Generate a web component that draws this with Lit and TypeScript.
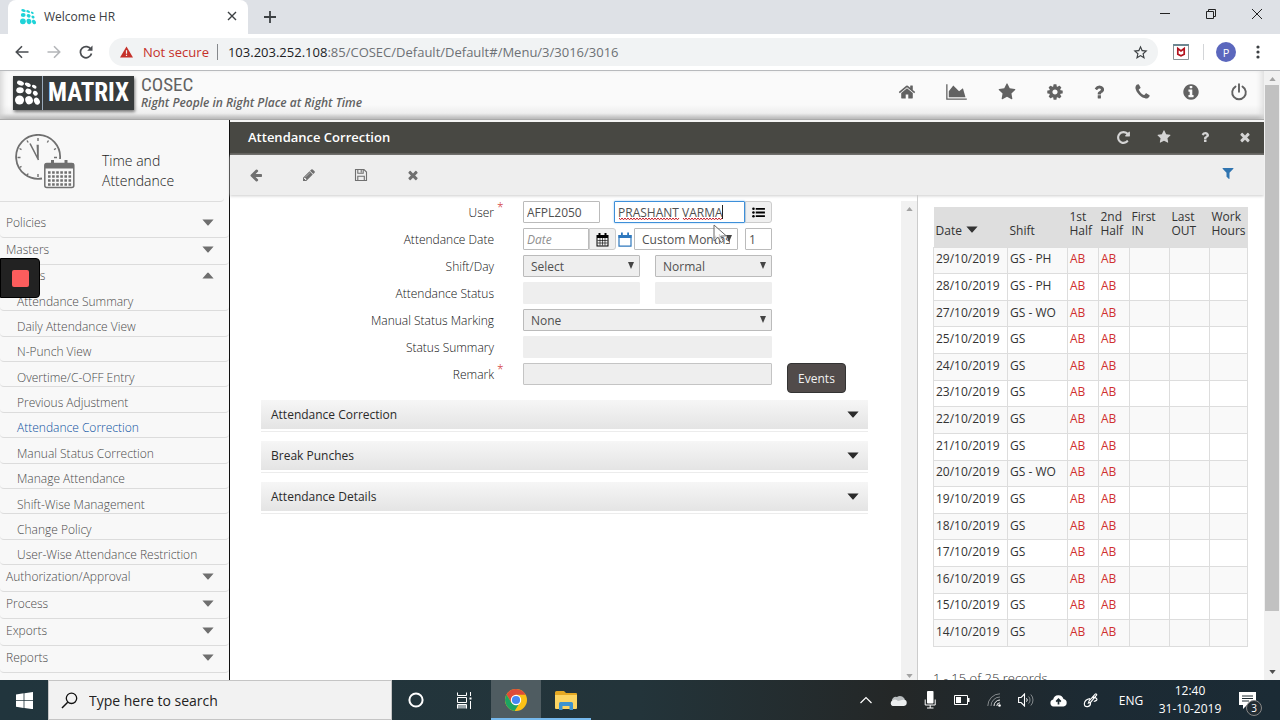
import { LitElement, html, css, svg, nothing } from "lit";
import { customElement, property, state } from "lit/decorators.js";
import { classMap } from "lit/directives/class-map.js";

interface Glyph {
  box: string;
  w: number;
  h: number;
  body: unknown;
}

const FA = "0 0 1792 1792";
const fa = (d: string, w: number, h = w, box = FA): Glyph => ({ box, w, h, body: svg`<path d=${d}></path>` });

const STAR =
  "M1728 647q0 22-26 48l-363 354 86 500q1 7 1 20 0 21-10.500 35.500t-30.500 14.500q-19 0-40-12l-449-236-449 236q-22 12-40 12-21 0-31.500-14.500t-10.500-35.500q0-6 2-20l86-500-364-354q-25-27-25-48 0-37 56-46l502-73 225-455q19-41 49-41t49 41l225 455 502 73q56 9 56 46z";
const QUESTION =
  "M1088 1256v240q0 16-12 28t-28 12h-240q-16 0-28-12t-12-28v-240q0-16 12-28t28-12h240q16 0 28 12t12 28zm316-600q0 54-15.500 101t-35 76.500-55 59.500-57.500 43.500-61 35.500q-41 23-68.500 65t-27.500 67q0 17-12 32.500t-28 15.500h-240q-15 0-25.500-18.500t-10.500-37.500v-45q0-83 65-156.500t143-108.500q59-27 84-56t25-76q0-42-46.500-74t-107.500-32q-65 0-108 29-35 25-107 115-13 16-31 16-12 0-25-8l-164-125q-13-10-15.500-25t5.500-28q160-266 464-266 80 0 161 31t146 83 106 127.500 41 158.500z";
const TIMES =
  "M1490 1322q0 40-28 68l-136 136q-28 28-68 28t-68-28l-294-294-294 294q-28 28-68 28t-68-28l-136-136q-28-28-28-68t28-68l294-294-294-294q-28-28-28-68t28-68l136-136q28-28 68-28t68 28l294 294 294-294q28-28 68-28t68 28l136 136q28 28 28 68t-28 68l-294 294 294 294q28 28 28 68z";

const dots = svg`
  <ellipse cx="3.500" cy="2.500" rx="2.300" ry="1.400" transform="rotate(20 3.500 2.500)"></ellipse>
  <ellipse cx="8.200" cy="3.500" rx="2" ry="1.200" transform="rotate(25 8.200 3.500)"></ellipse>
  <ellipse cx="12.300" cy="4.800" rx="1.600" ry="1" transform="rotate(30 12.300 4.800)"></ellipse>
  <ellipse cx="3.200" cy="7" rx="2.400" ry="1.900"></ellipse>
  <ellipse cx="8.600" cy="7.800" rx="2" ry="1.700" transform="rotate(30 8.600 7.800)"></ellipse>
  <ellipse cx="13" cy="9" rx="1.700" ry="1.400" transform="rotate(40 13 9)"></ellipse>
  <circle cx="2.900" cy="13.300" r="2.900"></circle>
  <ellipse cx="9" cy="13.400" rx="2.400" ry="2.700" transform="rotate(-20 9 13.400)"></ellipse>
  <ellipse cx="14" cy="14" rx="1.800" ry="2.400" transform="rotate(-25 14 14)"></ellipse>`;

const calendar = svg`
  <path d="M1.500 3h2v-2h2v2h4v-2h2v2h2v11.500h-12z M2.500 6v7.500h10V6z" fill-rule="evenodd"></path>
  <path d="M2.500 8.500h10M2.500 11h10M5 6v7.500M7.500 6v7.500M10 6v7.500" fill="none" stroke="currentColor" stroke-width=".6"></path>`;

const ICONS: Record<string, Glyph> = {
  dots: { box: "0 0 16 17", w: 16, h: 17, body: dots },
  dotsLarge: { box: "0 0 16 17", w: 25, h: 27, body: dots },
  home: fa(
    "M1472 992v480q0 26-19 45t-45 19h-384v-384h-256v384h-384q-26 0-45-19t-19-45v-480q0-1 .5-3t.5-3l575-474 575 474q1 2 1 6zm223-69l-62 74q-8 9-21 11h-3q-13 0-21-7l-692-577-692 577q-12 8-24 7-13-2-21-11l-62-74q-8-10-7-23.500t11-21.500l719-599q32-26 76-26t76 26l244 204v-195q0-14 9-23t23-9h192q14 0 23 9t9 23v408l219 182q10 8 11 21.500t-7 23.500z",
    18,
  ),
  chart: {
    box: "0 0 2048 1792",
    w: 21,
    h: 18,
    body: svg`<path d="M2048 1536v128H0V128h128v1408h1920zM1664 512l256 896H256V832l448-576 576 576z"></path>`,
  },
  star: fa(STAR, 18),
  starSmall: fa(STAR, 14),
  cog: fa(
    "M1152 896q0-106-75-181t-181-75-181 75-75 181 75 181 181 75 181-75 75-181zm512-109v222q0 12-8 23t-20 13l-185 28q-19 54-39 91 35 50 107 138 10 12 10 25t-9 23q-27 37-99 108t-94 71q-12 0-26-9l-138-108q-44 23-91 38-16 136-29 186-7 28-36 28h-222q-14 0-24.500-8.500t-11.500-21.500l-28-184q-49-16-90-37l-141 107q-10 9-25 9-14 0-25-11-126-114-165-168-7-10-7-23 0-12 8-23 15-21 51-66.500t54-70.500q-27-50-41-99l-183-27q-13-2-21-12.500t-8-23.500v-222q0-12 8-23t19-13l186-28q14-46 39-92-40-57-107-138-10-12-10-24 0-10 9-23 26-36 98.500-107.500t94.500-71.500q13 0 26 10l138 107q44-23 91-38 16-136 29-186 7-28 36-28h222q14 0 24.500 8.500t11.500 21.500l28 184q49 16 90 37l142-107q9-9 24-9 13 0 25 10 129 119 165 170 7 8 7 22 0 12-8 23-15 21-51 66.500t-54 70.500q26 50 41 98l183 28q13 2 21 12.500t8 23.500z",
    18,
  ),
  question: fa(QUESTION, 10, 18, "398 0 996 1792"),
  questionSmall: fa(QUESTION, 14),
  phone: fa(
    "M1600 1240q0 27-10 70.500t-21 68.500q-21 50-122 106-94 51-186 51-27 0-53-3.500t-57.500-12.500-47-14.500-55.500-20.500-49-18q-98-35-175-83-127-79-264-216t-216-264q-48-77-83-175-3-9-18-49t-20.500-55.500-14.500-47-12.500-57.500-3.500-53q0-92 51-186 56-101 106-122 25-11 68.500-21t70.500-10q14 0 21 3 18 6 53 76 11 19 30 54t35 63.500 31 53.500q3 4 17.500 25t21.500 35.500 7 28.500q0 20-28.500 50t-62 55-62 53-28.500 46q0 9 5 22.500t8.500 20.500 14 24 11.500 19q76 137 174 235t235 174q2 1 19 11.500t24 14 20.500 8.500 22.500 5q18 0 46-28.500t53-62 55-62 50-28.500q14 0 28.500 7t35.500 21.500 25 17.500q25 15 53.500 31t63.500 35 54 30q70 35 76 53 3 7 3 21z",
    17,
    18,
    "50 0 1692 1792",
  ),
  info: fa(
    "M1152 1376v-160q0-14-9-23t-23-9h-96v-512q0-14-9-23t-23-9h-320q-14 0-23 9t-9 23v160q0 14 9 23t23 9h96v320h-96q-14 0-23 9t-9 23v160q0 14 9 23t23 9h448q14 0 23-9t9-23zm-128-896v-160q0-14-9-23t-23-9h-192q-14 0-23 9t-9 23v160q0 14 9 23t23 9h192q14 0 23-9t9-23zm640 416q0 209-103 385.500t-279.500 279.500-385.500 103-385.500-103-279.500-279.500-103-385.500 103-385.500 279.500-279.500 385.500-103 385.500 103 279.500 279.500 103 385.500z",
    18,
  ),
  power: {
    box: "0 0 18 18",
    w: 18,
    h: 18,
    body: svg`<path d="M5.500 3.600a6.800 6.800 0 1 0 7 0M9 1.200v7.600" fill="none" stroke="currentColor" stroke-width="1.900" stroke-linecap="round"></path>`,
  },
  redo: fa(
    "M1664 256v448q0 26-19 45t-45 19h-448q-42 0-59-40-17-39 14-69l138-138q-148-137-349-137-104 0-198.500 40.500t-163.500 109.500-109.500 163.500-40.500 198.500 40.500 198.500 109.500 163.500 163.500 109.500 198.500 40.500q119 0 225-52t179-147q7-10 23-12 15 0 25 9l137 138q9 8 9.500 20.500t-7.500 22.500q-109 132-264 204.500t-327 72.500q-156 0-298-61t-245-164-164-245-61-298 61-298 164-245 245-164 298-61q147 0 284.500 55.500t244.500 156.500l130-129q29-31 70-14 39 17 39 59z",
    15,
  ),
  times: fa(TIMES, 14),
  arrow: fa(
    "M1536 896v128q0 53-32.500 90.500t-84.500 37.500h-704l293 294q38 36 38 90t-38 90l-75 76q-37 37-90 37-52 0-91-37l-651-652q-37-37-37-90 0-52 37-91l651-650q38-38 91-38 52 0 90 38l75 74q38 38 38 91t-38 91l-293 293h704q52 0 84.500 37.500t32.500 90.500z",
    14,
  ),
  pencil: fa(
    "M491 1536l91-91-235-235-91 91v107h128v128h107zm523-928q0-22-22-22-10 0-17 7l-542 542q-7 7-7 17 0 22 22 22 10 0 17-7l542-542q7-7 7-17zm-54-192l416 416-832 832h-416v-416zm683 96q0 53-37 90l-166 166-416-416 166-165q36-38 90-38 53 0 91 38l235 234q37 39 37 91z",
    14,
  ),
  save: {
    box: "0 0 14 14",
    w: 14,
    h: 14,
    body: svg`<path d="M1.500 1.500h8.500l2.500 2.500v8.500h-11zM3.800 12.500v-4.300h6.500v4.300M3.800 1.500v3.800h5.400V1.500M7.200 2v2.500" fill="none" stroke="currentColor" stroke-width="1.100"></path>`,
  },
  filter: fa(
    "M1595 295q17 41-14 70l-493 493v742q0 42-39 59-13 5-25 5-27 0-45-19l-256-256q-19-19-19-45v-486l-493-493q-31-29-14-70 17-39 59-39h1280q42 0 59 39z",
    14,
  ),
  list: {
    box: "0 0 14 12",
    w: 13,
    h: 11,
    body: svg`<path d="M4 1h10v2H4zM4 5h10v2H4zM4 9h10v2H4z"></path><circle cx="1.500" cy="2" r="1.400"></circle><circle cx="1.500" cy="6" r="1.400"></circle><circle cx="1.500" cy="10" r="1.400"></circle>`,
  },
  calendar: { box: "0 0 15 15", w: 15, h: 15, body: calendar },
  calendarOpen: {
    box: "0 0 14 15",
    w: 14,
    h: 15,
    body: svg`<path d="M1 3.500h12v10.700H1z" fill="none" stroke="currentColor" stroke-width="1.200"></path><path d="M.5 3h13v3H.5zM3 .5h1.800V4H3zM9.200.5H11V4H9.200z"></path>`,
  },
  caret: { box: "0 0 12 7", w: 12, h: 7, body: svg`<path d="M.4.5h11.200L6.800 6a1 1 0 0 1-1.600 0z"></path>` },
  caretUp: { box: "0 0 12 7", w: 12, h: 7, body: svg`<path d="M.4 6.500h11.200L6.800 1a1 1 0 0 0-1.600 0z"></path>` },
  scrollUp: { box: "0 0 8 5", w: 7, h: 4, body: svg`<path d="M0 5l4-5 4 5z"></path>` },
  scrollDown: { box: "0 0 8 5", w: 7, h: 4, body: svg`<path d="M0 0l4 5 4-5z"></path>` },
  clock: {
    box: "0 0 60 56",
    w: 60,
    h: 56,
    body: svg`
      <path d="M27 44.500a22 22 0 1 1 18-19.500" fill="none" stroke="currentColor" stroke-width="1.800"></path>
      <path d="M23 4v3M33.500 6.500l-1.200 2M12 6.500l1.200 2M41 14.500l-2 1.200M4.500 14.500l2 1.200M2.500 23.500h3M39 23.500h3M4.500 33.500l2-1.200M12 41.500l1.200-2M23 43v-3" fill="none" stroke="currentColor" stroke-width="1.400"></path>
      <path d="M23 25V11.500h-.6zM23.500 26L15 9.500" fill="none" stroke="currentColor" stroke-width="1.600"></path>
      <rect x="29.800" y="29.500" width="29" height="24" rx="2" fill="#f8f8f8" stroke="currentColor" stroke-width="1.500"></rect>
      <path d="M30 29.500h29v5H30zM36 26h3v5h-3zM49.500 26h3v5h-3z"></path>
      <path d="M33 38.500h23.500M33 42.500h23.500M33 46.500h23.500M33 50.500h23.500" fill="none" stroke="currentColor" stroke-width="2.600" stroke-dasharray="2.600 1.500"></path>`,
  },
  close: { box: "0 0 10 10", w: 10, h: 10, body: svg`<path d="M1 1l8 8M9 1l-8 8" fill="none" stroke="currentColor" stroke-width="1.400"></path>` },
  plus: { box: "0 0 12 12", w: 12, h: 12, body: svg`<path d="M6 0v12M0 6h12" fill="none" stroke="currentColor" stroke-width="1.800"></path>` },
  min: { box: "0 0 12 12", w: 12, h: 12, body: svg`<path d="M1 5.500h10" fill="none" stroke="currentColor"></path>` },
  restore: { box: "0 0 12 12", w: 12, h: 12, body: svg`<path d="M1.500 3.500h7v7h-7zM3.500 3V1.500h7v7H9" fill="none" stroke="currentColor"></path>` },
  winClose: { box: "0 0 12 12", w: 12, h: 12, body: svg`<path d="M1 1l10 10M11 1L1 11" fill="none" stroke="currentColor"></path>` },
  back: { box: "0 0 14 14", w: 14, h: 14, body: svg`<path d="M13.500 7H1.500M7 1.300L1.300 7 7 12.700" fill="none" stroke="currentColor" stroke-width="1.600"></path>` },
  forward: { box: "0 0 14 14", w: 14, h: 14, body: svg`<path d="M.5 7h12M7 1.300L12.700 7 7 12.700" fill="none" stroke="currentColor" stroke-width="1.600"></path>` },
  reload: {
    box: "0 0 14 14",
    w: 14,
    h: 14,
    body: svg`<path d="M12 4.500a5.600 5.600 0 1 0 .5 4" fill="none" stroke="currentColor" stroke-width="1.700"></path><path d="M13.500.5v5.300H8.200z"></path>`,
  },
  warn: {
    box: "0 0 14 12",
    w: 13,
    h: 12,
    body: svg`<path d="M7 0l7 12H0z"></path><path d="M7 4v4M7 9v1.400" stroke="#f1f3f4" stroke-width="1.300"></path>`,
  },
  starLine: {
    box: "0 0 24 24",
    w: 17,
    h: 17,
    body: svg`<path d="M22 9.240l-7.190-.62L12 2 9.190 8.630 2 9.240l5.460 4.730L5.820 21 12 17.270 18.180 21l-1.630-7.030L22 9.240zM12 15.400l-3.760 2.270 1-4.280-3.320-2.880 4.380-.38L12 6.100l1.710 4.040 4.380.38-3.320 2.880 1 4.280L12 15.400z"></path>`,
  },
  shield: {
    box: "0 0 16 16",
    w: 16,
    h: 16,
    body: svg`<path d="M.5.5h15v15H.5z" fill="#fff" stroke="#8a9296"></path><path d="M0 0h16v2H0z" fill="#6d8791"></path><path d="M4.800 4.500v5.700L8 11.700l3.200-1.500V4.500L8 7z" fill="none" stroke="#b3121d" stroke-width="1.700"></path>`,
  },
  more: { box: "0 0 4 14", w: 4, h: 14, body: svg`<circle cx="2" cy="2" r="1.600"></circle><circle cx="2" cy="7" r="1.600"></circle><circle cx="2" cy="12" r="1.600"></circle>` },
  windows: { box: "0 0 17 17", w: 17, h: 17, body: svg`<path d="M0 2.400L7.600 1.300v6.900H0zM8.400 1.200L17 0v8.200H8.400zM0 9h7.600v6.900L0 14.800zM8.400 9H17v8.200L8.400 16z"></path>` },
  search: { box: "0 0 17 17", w: 17, h: 17, body: svg`<circle cx="10.500" cy="6.300" r="5.200" fill="none" stroke="currentColor" stroke-width="1.300"></circle><path d="M6.700 10.200L1 16" stroke="currentColor" stroke-width="1.500"></path>` },
  cortana: { box: "0 0 16 16", w: 16, h: 16, body: svg`<circle cx="8" cy="8" r="6.600" fill="none" stroke="currentColor" stroke-width="2"></circle>` },
  taskview: {
    box: "0 0 17 17",
    w: 17,
    h: 17,
    body: svg`<path d="M1.500.5v3h9v-3M1.500 5.500h9v5h-9zM14.500 0v4M14.500 9v8" fill="none" stroke="currentColor"></path><path d="M1.500 16.500v-4h9v4" fill="#9aa5aa" stroke="currentColor"></path><path d="M13.500 5.500h2v2h-2z"></path>`,
  },
  chrome: {
    box: "0 0 22 22",
    w: 22,
    h: 22,
    body: svg`<circle cx="11" cy="11" r="11" fill="#fbc116"></circle><path d="M11 0a11 11 0 0 1 9.600 5.800H11L6.300 13.700 1.500 5.500A11 11 0 0 1 11 0z" fill="#dd4b39"></path><path d="M1.500 5.500l4.900 8.300L11 16.200l2.500-.5L9.600 21.900A11 11 0 0 1 1.500 5.500z" fill="#1da462"></path><circle cx="11" cy="11" r="5.200" fill="#fff"></circle><circle cx="11" cy="11" r="4.100" fill="#4587f3"></circle>`,
  },
  folder: {
    box: "0 0 22 19",
    w: 22,
    h: 19,
    body: svg`<path d="M0 1.500Q0 0 1.500 0H9l2 2h10q1 0 1 1v14H0z" fill="#e5a823"></path><path d="M0 4h22v13q0 1-1 1H1q-1 0-1-1z" fill="#fcd462"></path><path d="M4 19v-6.500Q4 11 5.500 11h11q1.500 0 1.500 1.500V19h-3.500v-4h-7v4z" fill="#3c92cf"></path>`,
  },
  chevron: { box: "0 0 14 14", w: 14, h: 14, body: svg`<path d="M1.500 10L7 4.500 12.500 10" fill="none" stroke="currentColor" stroke-width="1.200"></path>` },
  cloud: { box: "0 0 18 14", w: 18, h: 14, body: svg`<path d="M3 9a4 4 0 0 1 5-5 5 5 0 0 1 8 4L9 8z" fill="#b9bdbf"></path><path d="M3.500 13a3 3 0 0 1 0-5.500A4 4 0 0 1 9 8l6-1.500A3.300 3.300 0 0 1 15 13z" fill="#eceeef"></path>` },
  mic: { box: "0 0 14 18", w: 14, h: 18, body: svg`<rect x="4" y="0" width="6.500" height="12.500" rx=".8"></rect><path d="M2.200 8.500v5.500h10V8.500M7.200 14v3M4 17h6.500" fill="none" stroke="currentColor"></path>` },
  battery: { box: "0 0 16 10", w: 16, h: 10, body: svg`<path d="M.5.5h13v9H.5z" fill="none" stroke="currentColor"></path><path d="M2 2h5v6H2zM14 3h1.500v4H14z"></path>` },
  wifi: {
    box: "0 0 14 14",
    w: 14,
    h: 14,
    body: svg`<g fill="none" stroke="currentColor"><path d="M.8 13A12.300 12.300 0 0 1 13 .8M4 13a9 9 0 0 1 9-9" opacity=".45"></path><path d="M7 13a6 6 0 0 1 6-6M9.800 13A3.200 3.200 0 0 1 13 9.800" opacity=".9"></path></g><circle cx="12.500" cy="12.500" r="1.300"></circle>`,
  },
  sound: { box: "0 0 16 14", w: 16, h: 14, body: svg`<path d="M.6 4.500h2.500L6.500 1v12L3.100 9.500H.6z" fill="none" stroke="currentColor" stroke-width="1.100"></path><path d="M8.500 5.300a2.500 2.500 0 0 1 0 3.400" fill="none" stroke="currentColor"></path><path d="M10.600 3.500a5 5 0 0 1 0 7M12.800 1.500a8 8 0 0 1 0 11" fill="none" stroke="currentColor" opacity=".45"></path>` },
  upload: { box: "0 0 17 13", w: 17, h: 13, body: svg`<path d="M3.500 12.500a3.500 3.500 0 0 1-.3-6.900A5.300 5.300 0 0 1 13.500 5a3.800 3.800 0 0 1 0 7.500z"></path><path d="M8.500 10.500V6M6.200 7.600l2.300-2.300 2.300 2.300" fill="none" stroke="#1c2a31" stroke-width="1.700"></path>` },
  pen: { box: "0 0 16 16", w: 15, h: 15, body: svg`<path d="M6.500 8.500L13 1.200q1.300-.8 1.700.8L8.200 9.800l-2.400 1zM7.500 6Q2 7 1.500 11t3.500 3.500q3.500-.5 3-5M9 5q4-1 5.500 1t-3 3" fill="none" stroke="currentColor" stroke-width="1.200"></path>` },
  note: { box: "0 0 17 17", w: 17, h: 17, body: svg`<path d="M0 0h17v13H8l-4 4v-4H0z"></path><path d="M3 4h11M3 6.500h11M3 9h7" stroke="#1c2a31"></path>` },
  pointer: { box: "0 0 16 20", w: 16, h: 20, body: svg`<path d="M1 1v16l4-3.800 3 5.300 2.500-1.300-2.800-5 5.500-.4z" fill="#fff" fill-opacity=".7" stroke="#6a6a6a" stroke-width="1"></path>` },
};

@customElement("ui-icon")
export class UiIcon extends LitElement {
  @property() name = "";

  static styles = css`
    :host {
      display: inline-flex;
      flex: none;
    }
    svg {
      display: block;
      fill: currentColor;
    }
  `;

  render() {
    const g = ICONS[this.name];
    if (!g) return nothing;
    return html`<svg viewBox=${g.box} width=${g.w} height=${g.h} aria-hidden="true">${g.body}</svg>`;
  }
}

const base = css`
  * {
    box-sizing: border-box;
  }
  button {
    border: 0;
    padding: 0;
    background: none;
    color: inherit;
    font: inherit;
    display: inline-flex;
    align-items: center;
    justify-content: center;
  }
  a {
    color: inherit;
    text-decoration: none;
  }
`;

const iconButton = (name: string, label: string, cls = "") =>
  html`<button type="button" class=${cls} aria-label=${label}><ui-icon name=${name}></ui-icon></button>`;

@customElement("browser-bar")
export class BrowserBar extends LitElement {
  static styles = [
    base,
    css`
      :host {
        display: block;
        font-size: 13px;
        color: #3c4043;
        border-bottom: 1px solid #b8babd;
      }
      .tabs {
        height: 34px;
        display: flex;
        align-items: center;
        background: #dee1e6;
        padding-left: 8px;
      }
      .tab {
        width: 240px;
        height: 34px;
        display: flex;
        align-items: center;
        gap: 8px;
        padding: 0 11px 2px 12px;
        border-radius: 8px 8px 0 0;
        background: #fff;
        font-size: 12px;
      }
      .tab ui-icon {
        color: #1fd3d8;
      }
      .tab button ui-icon,
      .new ui-icon {
        color: #3c4043;
      }
      .title {
        flex: 1;
      }
      .new {
        width: 44px;
      }
      .win {
        margin-left: auto;
        display: flex;
        color: #222;
        padding-bottom: 6px;
      }
      .win button {
        width: 46px;
      }
      .nav {
        height: 36px;
        display: flex;
        align-items: center;
        background: #fff;
        padding-right: 20px;
      }
      .arrows {
        display: flex;
        padding: 0 7px 0 6px;
        color: #4a4d51;
      }
      .arrows button {
        width: 32px;
      }
      .dim {
        color: #b4b6b9;
      }
      .omni {
        flex: 1;
        height: 28px;
        display: flex;
        align-items: center;
        background: #f1f3f4;
        border-radius: 14px;
        padding: 0 9px 0 11px;
      }
      .risk {
        display: flex;
        align-items: center;
        gap: 10px;
        color: #c5312a;
        padding-right: 8px;
        margin-right: 10px;
        border-right: 1px solid #85888c;
        line-height: 16px;
      }
      .url {
        flex: 1;
        color: #6d7175;
      }
      .host {
        color: #202124;
      }
      .shield {
        margin: 0 14px 0 15px;
      }
      .avatar {
        width: 20px;
        height: 20px;
        border-radius: 50%;
        background: #5b67bd;
        color: #fff;
        font-size: 11px;
        margin: 0 20px 0 12px;
      }
      .sep {
        width: 1px;
        height: 16px;
        background: #d3d5d8;
      }
    `,
  ];

  render() {
    return html`
      <div class="tabs">
        <div class="tab">
          <ui-icon name="dots"></ui-icon>
          <span class="title">Welcome HR</span>
          ${iconButton("close", "Close tab")}
        </div>
        ${iconButton("plus", "New tab", "new")}
        <div class="win">${iconButton("min", "Minimize")}${iconButton("restore", "Restore")}${iconButton("winClose", "Close")}</div>
      </div>
      <div class="nav">
        <div class="arrows">${iconButton("back", "Back")}${iconButton("forward", "Forward", "dim")}${iconButton("reload", "Reload")}</div>
        <div class="omni">
          <span class="risk"><ui-icon name="warn"></ui-icon>Not secure</span>
          <span class="url"><span class="host">103.203.252.108</span>:85/COSEC/Default/Default#/Menu/3/3016/3016</span>
          ${iconButton("starLine", "Bookmark this page")}
        </div>
        ${iconButton("shield", "Site safety", "shield")}
        <span class="sep"></span>
        <button type="button" class="avatar">P</button>
        ${iconButton("more", "Menu")}
      </div>
    `;
  }
}

@customElement("product-header")
export class ProductHeader extends LitElement {
  static styles = [
    base,
    css`
      :host {
        display: flex;
        align-items: center;
        height: 49px;
        padding: 0 16px 5px 13px;
        background: linear-gradient(#fafafa 70%, #eee 88%, #b4b4b4);
        border-bottom: 1px solid #a9a9a9;
        box-shadow: inset 6px 0 6px -4px #d0d0d0, inset -6px 0 6px -4px #d8d8d8;
        color: #626262;
      }
      .logo {
        display: flex;
        align-items: center;
        height: 34px;
        background: #373b3c;
        color: #fff;
        box-shadow: 1px 2px 3px #777;
      }
      .logo ui-icon {
        padding: 0 2px;
      }
      .word {
        border-left: 1px solid #9ab;
        width: 92px;
        text-align: center;
        font: bold 25px/34px "Roboto Condensed", Roboto, sans-serif;
      }
      .names {
        margin-left: 7px;
      }
      .product {
        font: 19px/20px "Roboto Condensed", Roboto, sans-serif;
      }
      .tagline {
        font-size: 12px;
        line-height: 16px;
        font-style: italic;
        font-weight: 600;
      }
      nav {
        margin-left: auto;
        padding-bottom: 2px;
        width: 350px;
        display: flex;
        justify-content: space-between;
      }
    `,
  ];

  render() {
    return html`
      <div class="logo"><ui-icon name="dotsLarge"></ui-icon><span class="word">MATRIX</span></div>
      <div class="names">
        <div class="product">COSEC</div>
        <div class="tagline">Right People in Right Place at Right Time</div>
      </div>
      <nav>
        ${[
          ["home", "Home"],
          ["chart", "Dashboard"],
          ["star", "Favourites"],
          ["cog", "Settings"],
          ["question", "Help"],
          ["phone", "Contact"],
          ["info", "About"],
          ["power", "Log out"],
        ].map(([icon, label]) => iconButton(icon, label))}
      </nav>
    `;
  }
}

@customElement("side-menu")
export class SideMenu extends LitElement {
  @state() private current = "Attendance Correction";

  private subs = [
    "Attendance Summary",
    "Daily Attendance View",
    "N-Punch View",
    "Overtime/C-OFF Entry",
    "Previous Adjustment",
    "Attendance Correction",
    "Manual Status Correction",
    "Manage Attendance",
    "Shift-Wise Management",
    "Change Policy",
    "User-Wise Attendance Restriction",
  ];

  static styles = [
    base,
    css`
      :host {
        display: block;
        background: #f8f8f8;
        border-right: 1px solid #111;
        color: #4a4a4a;
        font-size: 12px;
        font-weight: 300;
        overflow: hidden;
      }
      .module {
        display: flex;
        align-items: center;
        gap: 27px;
        height: 82px;
        padding: 2px 0 0 15px;
        margin: 0 5px 9px 0;
        border-bottom: 1px solid #dedede;
        border-radius: 0 0 4px 0;
        font-size: 14px;
        line-height: 20px;
        color: #222;
      }
      .module span {
        padding-top: 18px;
      }
      .module ui-icon {
        color: #707070;
      }
      .group {
        display: flex;
        justify-content: space-between;
        width: 100%;
        height: 27px;
        padding: 0 15px 4px 6px;
        border-bottom: 1px solid #dcdcdc;
        border-radius: 4px;
      }
      .group ui-icon {
        color: #6f6f6f;
      }
      .open {
        height: 21px;
        padding-bottom: 0;
        border: 0;
      }
      ul {
        list-style: none;
        margin: 0;
        padding: 0;
        display: grid;
        grid-auto-rows: 1fr;
        height: 279px;
      }
      li {
        display: flex;
        align-items: center;
        padding: 6px 0 0 17px;
        border-bottom: 1px solid #dcdcdc;
        border-radius: 4px;
      }
      .current {
        color: #0b50a0;
      }
    `,
  ];

  private group(name: string, open = false) {
    return html`<button type="button" class=${classMap({ group: true, open })} aria-expanded=${String(open)}>
      ${name}<ui-icon name=${open ? "caretUp" : "caret"}></ui-icon>
    </button>`;
  }

  render() {
    return html`
      <div class="module"><ui-icon name="clock"></ui-icon><span>Time and<br />Attendance</span></div>
      ${this.group("Policies")}${this.group("Masters")}${this.group("Actions", true)}
      <ul>
        ${this.subs.map(
          (s) => html`<li>
            <a href="#" class=${classMap({ current: s === this.current })} @click=${() => (this.current = s)}>${s}</a>
          </li>`,
        )}
      </ul>
      ${["Authorization/Approval", "Process", "Exports", "Reports"].map((g) => this.group(g))}
    `;
  }
}

@customElement("correction-form")
export class CorrectionForm extends LitElement {
  static styles = [
    base,
    css`
      :host {
        display: block;
        padding: 6px 33px 0 0;
        color: #111;
        font-size: 12px;
        font-weight: 300;
      }
      form {
        display: grid;
        grid-template-columns: 264px 249px 1fr;
        column-gap: 29px;
        grid-auto-rows: 22px;
        row-gap: 5px;
      }
      .label {
        grid-column: 1;
        justify-self: end;
        align-self: center;
        position: relative;
      }
      .req::after {
        content: "*";
        position: absolute;
        left: 100%;
        top: -5px;
        padding-left: 3px;
        color: #d02a2a;
      }
      .fields {
        grid-column: 2;
        display: flex;
        position: relative;
        min-width: 0;
      }
      .split {
        gap: 15px;
      }
      .split > * {
        flex: 1;
      }
      input,
      select {
        min-width: 0;
        height: 22px;
        font: inherit;
        font-weight: 400;
        color: #505050;
        border: 1px solid #bbb;
        border-radius: 1px;
        background: #fff;
        padding: 0 3px;
        margin: 0;
        outline: 0;
        appearance: none;
      }
      input::placeholder {
        font-style: italic;
        color: #909090;
      }
      input:disabled {
        background: #eee;
        border-color: #eee;
      }
      input.soft:disabled {
        border-color: #c4c4c4;
      }
      .code {
        width: 77px;
        margin-right: 14px;
      }
      .name {
        flex: 1;
        position: relative;
        display: flex;
      }
      .name input {
        width: 100%;
        border-color: #3d8fd9;
        box-shadow: 0 0 2px #8fc0ee;
      }
      .squiggle {
        position: absolute;
        left: 5px;
        bottom: 2px;
        color: #c8202a;
      }
      .caretbar {
        position: absolute;
        left: 108px;
        top: 4px;
        width: 1px;
        height: 14px;
        background: #222;
      }
      .addon {
        width: 27px;
        border: 1px solid #ccc;
        border-radius: 0 3px 3px 0;
        background: #f0f0f0;
        color: #000;
      }
      .date {
        width: 66px;
      }
      .today {
        width: 18px;
        color: #2f78bd;
      }
      .pick {
        position: relative;
        display: flex;
      }
      .pick select {
        width: 100%;
        background: #eee;
        padding: 0 7px;
      }
      .pick::after {
        content: "";
        position: absolute;
        right: 6px;
        top: 7px;
        border: 3px solid transparent;
        border-top: 7px solid #444;
        border-bottom: 0;
      }
      .months {
        width: 104px;
        margin-right: 7px;
      }
      .months select {
        background: #fff;
      }
      .count {
        width: 27px;
      }
      .pointer {
        position: absolute;
        left: 190px;
        top: -4px;
      }
      .wide {
        flex: 1;
      }
      .events {
        grid-column: 3;
        justify-self: start;
        margin-left: -14px;
        width: 59px;
        height: 30px;
        border: 1px solid #333;
        border-radius: 4px;
        background: #514b4a;
        color: #f2f2f2;
        font-weight: 400;
      }
      .sections {
        display: grid;
        gap: 12px;
        padding: 15px 0 0 31px;
      }
      .section {
        display: flex;
        justify-content: space-between;
        height: 29px;
        padding: 0 9px 0 10px;
        background: linear-gradient(#f6f6f6, #e4e4e4);
        box-shadow: 0 2px 0 #fff, 0 3px 0 #ececec;
        font-weight: 500;
        color: #2a2a2a;
      }
    `,
  ];

  render() {
    const wave = (x: number, n: number) => `M${x} 1` + "l1.500 1.800 1.500-1.800".repeat(n);
    return html`
      <form @submit=${(e: Event) => e.preventDefault()}>
        <label class="label req" for="user">User</label>
        <div class="fields">
          <input class="code" id="user" value="AFPL2050" spellcheck="false" />
          <span class="name">
            <input aria-label="User name" value="PRASHANT VARMA" spellcheck="false" />
            <svg class="squiggle" width="104" height="4" fill="none" stroke="currentColor" aria-hidden="true">
              <path d=${wave(0, 20)}></path><path d=${wave(64, 13)}></path>
            </svg>
            <span class="caretbar"></span>
          </span>
          ${iconButton("list", "Browse users", "addon")}
        </div>

        <label class="label" for="date">Attendance Date</label>
        <div class="fields">
          <input class="date" id="date" placeholder="Date" />
          ${iconButton("calendar", "Pick date", "addon")}${iconButton("calendarOpen", "Today", "today")}
          <span class="pick months"><select aria-label="Period"><option>Custom Months</option></select></span>
          <input class="count" aria-label="Number of months" value="1" />
          <ui-icon class="pointer" name="pointer"></ui-icon>
        </div>

        <label class="label" for="shift">Shift/Day</label>
        <div class="fields split">
          <span class="pick"><select id="shift"><option>Select</option></select></span>
          <span class="pick"><select aria-label="Day type"><option>Normal</option></select></span>
        </div>

        <label class="label" for="status">Attendance Status</label>
        <div class="fields split"><input id="status" disabled /><input aria-label="Second half status" disabled /></div>

        <label class="label" for="marking">Manual Status Marking</label>
        <div class="fields"><span class="pick wide"><select id="marking"><option>None</option></select></span></div>

        <label class="label" for="summary">Status Summary</label>
        <div class="fields"><input class="wide" id="summary" disabled /></div>

        <label class="label req" for="remark">Remark</label>
        <div class="fields"><input class="wide soft" id="remark" disabled /></div>
        <button type="button" class="events">Events</button>
      </form>
      <div class="sections">
        ${["Attendance Correction", "Break Punches", "Attendance Details"].map(
          (t) => html`<button type="button" class="section" aria-expanded="false">${t}<ui-icon name="caret"></ui-icon></button>`,
        )}
      </div>
    `;
  }
}

@customElement("records-table")
export class RecordsTable extends LitElement {
  private rows: [string, string][] = [
    ["29/10/2019", "GS - PH"],
    ["28/10/2019", "GS - PH"],
    ["27/10/2019", "GS - WO"],
    ["25/10/2019", "GS"],
    ["24/10/2019", "GS"],
    ["23/10/2019", "GS"],
    ["22/10/2019", "GS"],
    ["21/10/2019", "GS"],
    ["20/10/2019", "GS - WO"],
    ["19/10/2019", "GS"],
    ["18/10/2019", "GS"],
    ["17/10/2019", "GS"],
    ["16/10/2019", "GS"],
    ["15/10/2019", "GS"],
    ["14/10/2019", "GS"],
  ];

  static styles = [
    base,
    css`
      :host {
        display: block;
        padding: 12px 16px 0 15px;
        border-left: 1px solid #ccc;
        color: #333;
        font-size: 12px;
        overflow: hidden;
      }
      table {
        width: 100%;
        height: 440px;
        border-collapse: collapse;
        table-layout: fixed;
      }
      .c-date {
        width: 74px;
      }
      .c-shift {
        width: 60px;
      }
      .c-half {
        width: 31px;
      }
      .c-time {
        width: 40px;
      }
      th {
        height: 40px;
        padding: 0 0 9px 2px;
        background: #dedede;
        text-align: left;
        vertical-align: bottom;
        font-weight: 400;
        line-height: 14px;
      }
      td {
        padding: 0 0 2px 2px;
        border: 1px solid #ddd;
        line-height: 16px;
        white-space: nowrap;
      }
      tbody tr:nth-child(odd) {
        background: #f9f9f9;
      }
      .ab {
        color: #d0302f;
      }
      .sort {
        margin-left: 4px;
        vertical-align: 2px;
      }
      p {
        margin: 22px 0 0;
        font-size: 13px;
        font-weight: 300;
        line-height: 18px;
      }
    `,
  ];

  render() {
    return html`
      <table>
        <colgroup>
          <col class="c-date" /><col class="c-shift" /><col class="c-half" /><col class="c-half" /><col class="c-time" /><col
            class="c-time"
          /><col />
        </colgroup>
        <thead>
          <tr>
            <th>Date<ui-icon class="sort" name="caret"></ui-icon></th>
            <th>Shift</th>
            <th>1st<br />Half</th>
            <th>2nd<br />Half</th>
            <th>First<br />IN</th>
            <th>Last<br />OUT</th>
            <th>Work<br />Hours</th>
          </tr>
        </thead>
        <tbody>
          ${this.rows.map(
            ([d, s]) => html`<tr>
              <td>${d}</td>
              <td>${s}</td>
              <td class="ab">AB</td>
              <td class="ab">AB</td>
              <td></td>
              <td></td>
              <td></td>
            </tr>`,
          )}
        </tbody>
      </table>
      <p>1 - 15 of 25 records</p>
    `;
  }
}

@customElement("task-bar")
export class TaskBar extends LitElement {
  static styles = [
    base,
    css`
      :host {
        display: flex;
        height: 40px;
        background: linear-gradient(90deg, #21353d, #23343a 50%, #242727 70%, #1c2a33 85%, #1b2b35);
        color: #fff;
        font-size: 12px;
      }
      .app {
        width: 48px;
        height: 40px;
      }
      .live {
        width: 50px;
        border-bottom: 2px solid #76b9ed;
        padding-top: 2px;
      }
      .front {
        background: #4f5c61;
        margin-left: 3px;
      }
      .search {
        width: 344px;
        display: flex;
        align-items: center;
        gap: 11px;
        padding-left: 12px;
        background: #f2f2f2;
        border: 1px solid #c5c5c5;
        color: #111;
      }
      .search input {
        flex: 1;
        min-width: 0;
        border: 0;
        padding: 0;
        background: none;
        font: inherit;
        font-size: 14px;
        outline: 0;
      }
      .search input::placeholder {
        color: #222;
      }
      .tray {
        margin-left: auto;
        display: flex;
        align-items: center;
      }
      .tray button {
        width: 32px;
        height: 40px;
      }
      .lang {
        width: 50px;
        text-align: center;
      }
      .clock {
        width: 68px;
        text-align: center;
        line-height: 18px;
        white-space: nowrap;
      }
      .tray .notes {
        width: 44px;
        padding-left: 2px;
        margin-right: 12px;
        position: relative;
      }
      .badge {
        position: absolute;
        right: 6px;
        bottom: 4px;
        width: 16px;
        height: 16px;
        border: 1px solid #888;
        border-radius: 50%;
        background: #222c32;
        font-size: 10px;
        line-height: 14px;
      }
    `,
  ];

  render() {
    return html`
      ${iconButton("windows", "Start", "app")}
      <label class="search"><ui-icon name="search"></ui-icon><input aria-label="Search" placeholder="Type here to search" /></label>
      ${iconButton("cortana", "Cortana", "app")}${iconButton("taskview", "Task view", "app")}
      ${iconButton("chrome", "Chrome", "app live front")}${iconButton("folder", "File Explorer", "app live")}
      <div class="tray">
        ${[
          ["chevron", "Show hidden icons"],
          ["cloud", "OneDrive"],
          ["mic", "Microphone"],
          ["battery", "Battery"],
          ["wifi", "Network"],
          ["sound", "Volume"],
          ["upload", "Backup"],
          ["pen", "Ink workspace"],
        ].map(([icon, label]) => iconButton(icon, label))}
        <span class="lang">ENG</span>
        <div class="clock">12:40<br />31-10-2019</div>
        <button type="button" class="notes" aria-label="Notifications">
          <ui-icon name="note"></ui-icon><span class="badge">3</span>
        </button>
      </div>
    `;
  }
}

@customElement("app-root")
export class AppRoot extends LitElement {
  static styles = [
    base,
    css`
      :host {
        display: flex;
        flex-direction: column;
        height: 100vh;
        overflow: hidden;
        background: #fff;
        font-family: "Open Sans", "Noto Sans", sans-serif;
        position: relative;
      }
      .view {
        flex: 1;
        min-height: 0;
        display: flex;
      }
      .page {
        flex: 1;
        min-width: 0;
        display: flex;
        flex-direction: column;
        background: #f4f4f4;
      }
      .body {
        flex: 1;
        min-height: 0;
        display: grid;
        grid-template-columns: 230px 1fr;
      }
      .main {
        display: flex;
        flex-direction: column;
        min-height: 0;
        margin-top: 2px;
        background: #fff;
      }
      .titlebar {
        display: flex;
        align-items: center;
        justify-content: space-between;
        height: 33px;
        padding: 0 12px 1px 18px;
        background: #484843;
        border-bottom: 2px solid #5d5c58;
        color: #fff;
      }
      h1 {
        margin: 0;
        font-size: 13px;
        font-weight: 600;
      }
      .actions {
        width: 136px;
        display: flex;
        justify-content: space-between;
        color: #d4d4d4;
      }
      .tools {
        display: flex;
        align-items: center;
        height: 40px;
        padding: 0 29px 0 1px;
        background: #eee;
        box-shadow: 0 1px 3px #ccc;
        color: #707070;
      }
      .tools button {
        width: 52px;
        height: 40px;
      }
      .tools .filter {
        width: 14px;
        padding-bottom: 4px;
        margin-left: auto;
        color: #2f74b0;
      }
      .content {
        flex: 1;
        min-height: 0;
        display: grid;
        grid-template-columns: 1fr 16px 347px;
      }
      .rail {
        display: flex;
        flex-direction: column;
        justify-content: space-between;
        align-items: center;
        background: #f1f1f1;
        color: #a3a3a3;
      }
      .inner {
        margin-top: 6px;
        padding: 6px 0 2px;
      }
      .outer {
        width: 16px;
        padding: 6px 0;
        gap: 4px;
        color: #505050;
      }
      .thumb {
        width: 14px;
        flex: 1;
        margin-bottom: 55px;
        background: #c1c1c1;
      }
      .light {
        color: #a3a3a3;
      }
      .recorder {
        position: absolute;
        left: 0;
        top: 258px;
        width: 40px;
        height: 40px;
        background: #222;
        border: 1px solid #000;
        border-radius: 0 4px 4px 0;
      }
      .stop {
        width: 17px;
        height: 17px;
        border-radius: 2px;
        background: #fc5d5d;
      }
    `,
  ];

  render() {
    return html`
      <browser-bar></browser-bar>
      <div class="view">
        <div class="page">
          <product-header></product-header>
          <div class="body">
            <side-menu></side-menu>
            <main class="main">
              <div class="titlebar">
                <h1>Attendance Correction</h1>
                <div class="actions">
                  ${iconButton("redo", "Refresh")}${iconButton("starSmall", "Add to favourites")}${iconButton("questionSmall", "Help")}${iconButton("times", "Close")}
                </div>
              </div>
              <div class="tools">
                ${iconButton("arrow", "Back")}${iconButton("pencil", "Edit")}${iconButton("save", "Save")}${iconButton("times", "Cancel")}
                ${iconButton("filter", "Filter", "filter")}
              </div>
              <div class="content">
                <correction-form></correction-form>
                <div class="rail inner"><ui-icon name="scrollUp"></ui-icon><ui-icon name="scrollDown"></ui-icon></div>
                <records-table></records-table>
              </div>
            </main>
          </div>
        </div>
        <div class="rail outer">
          <ui-icon class="light" name="scrollUp"></ui-icon><span class="thumb"></span><ui-icon name="scrollDown"></ui-icon>
        </div>
      </div>
      <task-bar></task-bar>
      <button type="button" class="recorder" aria-label="Stop recording"><span class="stop"></span></button>
    `;
  }
}
